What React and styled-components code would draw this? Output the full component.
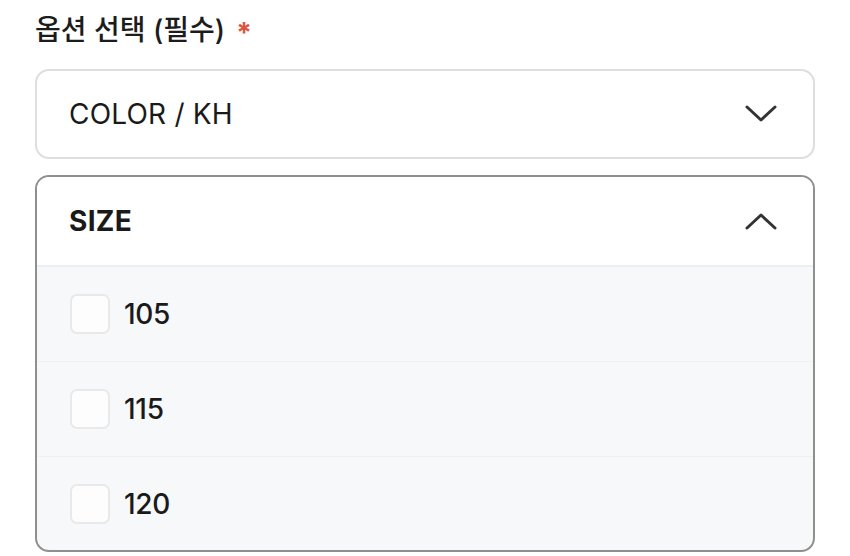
import React, { useState } from "react";
import styled, { createGlobalStyle } from "styled-components";

const Global = createGlobalStyle`
  html, body { margin: 0; padding: 0; background: #ffffff; }
  body { font-family: Inter, "Noto Sans CJK KR", "Noto Sans", sans-serif; color: #1a1a1a; }
`;

const Page = styled.div`
  padding: 12px 35px 0 35px;
  width: 780px;
  display: flex;
  flex-direction: column;
`;

const Title = styled.h2`
  margin: 0 0 21px 0;
  font-family: Inter, "Noto Sans CJK KR", sans-serif;
  font-size: 28px;
  font-weight: 500;
  line-height: 36px;
  color: #1c1c1c;
  display: flex;
  align-items: center;
  gap: 11px;
`;

const Required = styled.span`
  color: #e0533d;
  font-size: 28px;
  font-weight: 700;
  position: relative;
  top: 3px;
`;

const SelectBox = styled.button`
  box-sizing: border-box;
  height: 90px;
  width: 100%;
  border: 2px solid #dedede;
  border-radius: 14px;
  background: #fff;
  display: flex;
  align-items: center;
  justify-content: space-between;
  padding: 0 36px 0 32px;
  font-family: Inter, sans-serif;
  font-size: 28px;
  font-weight: 400;
  color: #1a1a1a;
  letter-spacing: 0.2px;
  margin-bottom: 16px;
  cursor: pointer;
`;

const Accordion = styled.div`
  box-sizing: border-box;
  width: 100%;
  border: 2px solid #8f8f8f;
  border-radius: 14px;
  overflow: hidden;
  background: #f7f8fa;
`;

const AccHeader = styled.div`
  box-sizing: border-box;
  height: 90px;
  background: #fff;
  display: flex;
  align-items: center;
  justify-content: space-between;
  padding: 0 36px 0 32px;
  border-bottom: 2px solid #eceef1;
  font-size: 28px;
  font-weight: 700;
  color: #1a1a1a;
  letter-spacing: 0.3px;
`;

const Row = styled.label`
  box-sizing: border-box;
  height: ${(p) => (p.$last ? 93 : 95)}px;
  display: flex;
  align-items: center;
  padding-left: 33px;
  gap: 14px;
  border-bottom: ${(p) => (p.$last ? "none" : "1px solid #eef0f3")};
  font-size: 28px;
  font-weight: 500;
  color: #1a1a1a;
  letter-spacing: -0.3px;
  cursor: pointer;
`;

const Box = styled.span`
  box-sizing: border-box;
  width: 40px;
  height: 40px;
  border: 2px solid #e9e9e9;
  border-radius: 7px;
  background: #fdfdfd;
  display: inline-flex;
  align-items: center;
  justify-content: center;
`;

const Chevron = ({ up }) => (
  <svg width="32" height="18" viewBox="0 0 32 18" fill="none">
    <path
      d={up ? "M2 16 L16 3 L30 16" : "M2 2 L16 15 L30 2"}
      stroke="#333"
      strokeWidth="3"
      strokeLinecap="round"
      strokeLinejoin="round"
    />
  </svg>
);

const sizes = ["105", "115", "120"];

export default function App() {
  const [checked, setChecked] = useState({});
  return (
    <>
      <Global />
      <Page>
        <Title>
          옵션 선택 (필수) <Required>*</Required>
        </Title>
        <SelectBox>
          <span>COLOR / KH</span>
          <Chevron />
        </SelectBox>
        <Accordion>
          <AccHeader>
            <span>SIZE</span>
            <Chevron up />
          </AccHeader>
          {sizes.map((s, i) => (
            <Row
              key={s}
              $last={i === sizes.length - 1}
              onClick={() => setChecked({ ...checked, [s]: !checked[s] })}
            >
              <Box>{checked[s] ? "✓" : null}</Box>
              {s}
            </Row>
          ))}
        </Accordion>
      </Page>
    </>
  );
}
